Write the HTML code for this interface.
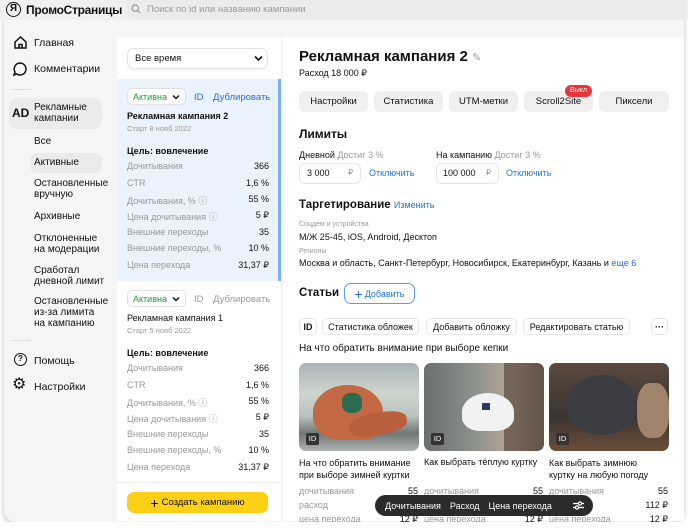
<!DOCTYPE html>
<html><head><meta charset="utf-8"><style>
*{box-sizing:border-box;margin:0;padding:0}
body{width:688px;height:531px;background:#fff;font-family:"Liberation Sans","Noto Sans CJK SC",sans-serif;color:#111;position:relative;overflow:hidden;font-size:10px}
.a{position:absolute;white-space:nowrap}
.frame{position:absolute;left:4px;top:-10px;width:680px;height:532px;border-radius:12px;background:#f5f5f6;box-shadow:0 2px 6px rgba(0,0,0,.25);overflow:hidden}
.hdr{position:absolute;left:0;top:0;width:688px;height:20px;background:#f0f0f0}
.gray{color:#9a9a9a}
.blue{color:#1f74d9}
.row{position:absolute;left:10px;right:12px;display:flex;justify-content:space-between;font-size:9px}
.row span:first-child{color:#999}
.tab{position:absolute;top:91px;height:21px;background:#efefef;border-radius:6px;font-size:9.5px;display:flex;align-items:center;justify-content:center}
.chip{position:absolute;top:318px;height:17px;border:1px solid #e6e6e6;border-radius:5px;font-size:9px;display:flex;align-items:center;justify-content:center;background:#fff}
.img{position:absolute;top:363px;width:120px;height:88px;border-radius:7px;overflow:hidden}
.idb{position:absolute;left:7px;bottom:6px;width:13px;height:12px;background:#333;color:#fff;border-radius:2px;font-size:7.5px;text-align:center;line-height:12px}
.st{position:absolute;font-size:9px;color:#999}
.sv{position:absolute;font-size:9px;text-align:right;width:30px}
</style></head><body>
<div class="frame"></div>
<div class="hdr"></div>
<!-- logo -->
<div class="a" style="left:6px;top:2px;width:15px;height:15px;border:1.5px solid #111;border-radius:50%;font-size:10px;font-weight:bold;text-align:center;line-height:12px">Я</div>
<div class="a" style="left:26px;top:3px;font-size:12px;font-weight:bold;letter-spacing:-0.3px">ПромоСтраницы</div>
<div class="a" style="left:127px;top:0;width:560px;height:19px;background:#ebebeb;border-radius:0 0 0 6px"></div>
<svg class="a" style="left:131px;top:4px" width="10" height="10" viewBox="0 0 10 10"><circle cx="4.2" cy="4.2" r="3.2" fill="none" stroke="#999" stroke-width="1.2"/><path d="M6.6 6.6 L9 9" stroke="#999" stroke-width="1.2"/></svg>
<div class="a gray" style="left:147px;top:4px;font-size:9.5px">Поиск по id или названию кампании</div>
<!-- sidebar -->
<svg class="a" style="left:13px;top:35px" width="15" height="15" viewBox="0 0 15 15"><path d="M2 7 L7.5 2 L13 7 V13 H2 Z M6 13 V9.5 H9 V13" fill="none" stroke="#111" stroke-width="1.5"/></svg>
<div class="a" style="left:34px;top:37px;font-size:10.5px">Главная</div>
<svg class="a" style="left:12px;top:61px" width="16" height="16" viewBox="0 0 16 16"><path d="M8 2a6 6 0 1 1-3.5 10.9L2 14l1-3A6 6 0 0 1 8 2z" fill="none" stroke="#111" stroke-width="1.5"/></svg>
<div class="a" style="left:34px;top:63px;font-size:10.5px">Комментарии</div>
<div class="a" style="left:11px;top:89px;width:20px;height:1px;background:#ddd"></div>
<div class="a" style="left:9px;top:98px;width:93px;height:31px;background:#ebebeb;border-radius:8px"></div>
<div class="a" style="left:12px;top:106px;font-size:12px;font-weight:bold">AD</div>
<div class="a" style="left:34px;top:102px;font-size:10px;line-height:11px">Рекламные<br>кампании</div>
<div class="a" style="left:34px;top:136px;font-size:10px">Все</div>
<div class="a" style="left:30px;top:153px;width:72px;height:20px;background:#ebebeb;border-radius:7px"></div>
<div class="a" style="left:34px;top:157px;font-size:10px">Активные</div>
<div class="a" style="left:34px;top:178px;font-size:10px;line-height:11px">Остановленные<br>вручную</div>
<div class="a" style="left:34px;top:211px;font-size:10px">Архивные</div>
<div class="a" style="left:34px;top:233px;font-size:10px;line-height:11px">Отклоненные<br>на модерации</div>
<div class="a" style="left:34px;top:265px;font-size:10px;line-height:11px">Сработал<br>дневной лимит</div>
<div class="a" style="left:34px;top:296px;font-size:10px;line-height:11px">Остановленные<br>из-за лимита<br>на кампанию</div>
<div class="a" style="left:11px;top:340px;width:20px;height:1px;background:#ddd"></div>
<div class="a" style="left:14px;top:353px;width:13px;height:13px;border:1.5px solid #111;border-radius:50%;font-size:8px;text-align:center;line-height:10px;font-weight:bold">?</div>
<div class="a" style="left:34px;top:355px;font-size:10.5px">Помощь</div>
<div class="a" style="left:12px;top:377px;font-size:16px;line-height:16px">&#9881;</div>
<div class="a" style="left:34px;top:381px;font-size:10.5px">Настройки</div>
<!-- campaigns column -->
<div class="a" style="left:117px;top:37px;width:164px;height:484px;background:#fff"></div>
<div class="a" style="left:127px;top:48px;width:141px;height:21px;border:1px solid #e3e3e3;border-radius:7px;box-shadow:0 1px 2px rgba(0,0,0,.06)"></div>
<div class="a" style="left:135px;top:53px;font-size:9.5px">Все время</div>
<svg class="a" style="left:254px;top:55px" width="9" height="7" viewBox="0 0 9 7"><path d="M1 1.5 L4.5 5 L8 1.5" fill="none" stroke="#111" stroke-width="1.6"/></svg>
<div class="a" style="left:117px;top:79px;width:164px;height:202px;background:#eaf2fc"></div>
<div class="a" style="left:278px;top:79px;width:3px;height:202px;background:#7cb1ef"></div>
<div class="a" style="left:127px;top:88px;width:59px;height:17px;background:#fff;border:1px solid #e0e0e0;border-radius:5px"></div>
<div class="a" style="left:133px;top:92px;font-size:9px;color:#1a9b3a">Активна</div>
<svg class="a" style="left:172px;top:94px" width="8" height="6" viewBox="0 0 8 6"><path d="M1 1.5 L4 4.5 L7 1.5" fill="none" stroke="#111" stroke-width="1.5"/></svg>
<div class="a blue" style="left:194px;top:92px;font-size:9.5px">ID</div>
<div class="a blue" style="left:213px;top:92px;font-size:9.5px">Дублировать</div>
<div class="a" style="left:127px;top:111px;font-size:9px;font-weight:bold">Рекламная кампания 2</div>
<div class="a gray" style="left:127px;top:124px;font-size:7.5px">Старт 8 нояб 2022</div>
<div class="a" style="left:127px;top:146px;font-size:9px;font-weight:bold">Цель: вовлечение</div>
<div class="a" style="left:117px;top:161px;width:164px">
<div class="row" style="top:0">  <span>Дочитывания</span><span>366</span></div>
<div class="row" style="top:17px"><span>CTR</span><span>1,6 %</span></div>
<div class="row" style="top:33px"><span>Дочитывания, % ⓘ</span><span>55 %</span></div>
<div class="row" style="top:49px"><span>Цена дочитывания ⓘ</span><span>5 ₽</span></div>
<div class="row" style="top:66px"><span>Внешние переходы</span><span>35</span></div>
<div class="row" style="top:82px"><span>Внешние переходы, %</span><span>10 %</span></div>
<div class="row" style="top:99px"><span>Цена перехода</span><span>31,37 ₽</span></div>
</div>
<div class="a" style="left:127px;top:290px;width:59px;height:17px;background:#fff;border:1px solid #e0e0e0;border-radius:5px"></div>
<div class="a" style="left:133px;top:294px;font-size:9px;color:#1a9b3a">Активна</div>
<svg class="a" style="left:172px;top:296px" width="8" height="6" viewBox="0 0 8 6"><path d="M1 1.5 L4 4.5 L7 1.5" fill="none" stroke="#111" stroke-width="1.5"/></svg>
<div class="a gray" style="left:194px;top:294px;font-size:9.5px">ID</div>
<div class="a gray" style="left:213px;top:294px;font-size:9.5px">Дублировать</div>
<div class="a" style="left:127px;top:313px;font-size:9px">Рекламная кампания 1</div>
<div class="a gray" style="left:127px;top:326px;font-size:7.5px">Старт 5 нояб 2022</div>
<div class="a" style="left:127px;top:348px;font-size:9px;font-weight:bold">Цель: вовлечение</div>
<div class="a" style="left:117px;top:363px;width:164px">
<div class="row" style="top:0">  <span>Дочитывания</span><span>366</span></div>
<div class="row" style="top:17px"><span>CTR</span><span>1,6 %</span></div>
<div class="row" style="top:33px"><span>Дочитывания, % ⓘ</span><span>55 %</span></div>
<div class="row" style="top:49px"><span>Цена дочитывания ⓘ</span><span>5 ₽</span></div>
<div class="row" style="top:66px"><span>Внешние переходы</span><span>35</span></div>
<div class="row" style="top:82px"><span>Внешние переходы, %</span><span>10 %</span></div>
<div class="row" style="top:99px"><span>Цена перехода</span><span>31,37 ₽</span></div>
</div>
<div class="a" style="left:117px;top:482px;width:164px;height:1px;background:#eee"></div>
<div class="a" style="left:127px;top:492px;width:141px;height:21px;background:#fdd015;border-radius:7px;font-size:9.5px;display:flex;align-items:center;justify-content:center"><span style="font-size:14px;margin-right:3px;line-height:10px">+</span>Создать кампанию</div>
<!-- right panel -->
<div class="a" style="left:283px;top:37px;width:401px;height:484px;background:#fff"></div>
<div class="a" style="left:299px;top:48px;font-size:15px;font-weight:bold">Рекламная кампания 2 <span style="color:#999;font-weight:normal;font-size:11px">✎</span></div>
<div class="a" style="left:299px;top:68px;font-size:9px">Расход 18 000 ₽</div>
<div class="tab" style="left:299px;width:69px">Настройки</div>
<div class="tab" style="left:374px;width:69px">Статистика</div>
<div class="tab" style="left:449px;width:69px">UTM-метки</div>
<div class="tab" style="left:524px;width:69px">Scroll2Site</div>
<div class="tab" style="left:599px;width:70px">Пиксели</div>
<div class="a" style="left:565px;top:85px;width:27px;height:12px;background:#e8363d;color:#fff;border-radius:6px;font-size:7px;text-align:center;line-height:12px">Выкл</div>
<div class="a" style="left:299px;top:127px;font-size:12px;font-weight:bold">Лимиты</div>
<div class="a" style="left:299px;top:150px;font-size:9px">Дневной <span class="gray">Достиг 3 %</span></div>
<div class="a" style="left:436px;top:150px;font-size:9px">На кампанию <span class="gray">Достиг 3 %</span></div>
<div class="a" style="left:299px;top:163px;width:62px;height:21px;border:1px solid #e6e6e6;border-radius:6px"></div>
<div class="a" style="left:307px;top:168px;font-size:9px">3 000</div><div class="a gray" style="left:348px;top:168px;font-size:8px">₽</div>
<div class="a blue" style="left:369px;top:168px;font-size:9px">Отключить</div>
<div class="a" style="left:436px;top:163px;width:63px;height:21px;border:1px solid #e6e6e6;border-radius:6px"></div>
<div class="a" style="left:443px;top:168px;font-size:9px">100 000</div><div class="a gray" style="left:486px;top:168px;font-size:8px">₽</div>
<div class="a blue" style="left:506px;top:168px;font-size:9px">Отключить</div>
<div class="a" style="left:299px;top:199px;font-size:11.5px;font-weight:bold">Таргетирование <span class="blue" style="font-weight:normal;font-size:9px">Изменить</span></div>
<div class="a gray" style="left:299px;top:221px;font-size:7px">Соцдем и устройства</div>
<div class="a" style="left:299px;top:232px;font-size:9px">М/Ж 25-45, iOS, Android, Десктоп</div>
<div class="a gray" style="left:299px;top:248px;font-size:7px">Регионы</div>
<div class="a" style="left:299px;top:258px;font-size:9px">Москва и область, Санкт-Петербург, Новосибирск, Екатеринбург, Казань и <span class="blue">еще 6</span></div>
<div class="a" style="left:299px;top:287px;font-size:11.5px;font-weight:bold">Статьи</div>
<div class="a blue" style="left:344px;top:283px;width:71px;height:21px;border:1px solid #5a9be8;border-radius:7px;font-size:9px;display:flex;align-items:center;justify-content:center"><span style="font-size:14px;margin-right:2px;line-height:10px">+</span>Добавить</div>
<div class="chip" style="left:299px;width:18px;font-weight:bold">ID</div>
<div class="chip" style="left:322px;width:97px">Статистика обложек</div>
<div class="chip" style="left:426px;width:91px">Добавить обложку</div>
<div class="chip" style="left:523px;width:107px">Редактировать статью</div>
<div class="chip" style="left:651px;width:17px;font-weight:bold">···</div>
<div class="a" style="left:299px;top:343px;font-size:10px">На что обратить внимание при выборе кепки</div>
<div class="img" style="left:299px;background:linear-gradient(180deg,#a8b4b8 0%,#cfd6d0 35%,#b9c2bd 60%,#6f7775 80%,#aeb2b0 100%)">
<div class="a" style="left:14px;top:22px;width:70px;height:55px;background:#c36a45;border-radius:50% 50% 30% 40%"></div>
<div class="a" style="left:50px;top:50px;width:58px;height:22px;background:#b85f3d;border-radius:40%;transform:rotate(-10deg)"></div>
<div class="a" style="left:43px;top:30px;width:20px;height:20px;background:#2e6b50;border-radius:40%"></div>
<div class="idb">ID</div></div>
<div class="img" style="left:424px;background:linear-gradient(90deg,#6b6f6e 0%,#8c908b 40%,#b8a798 75%,#7a6a5e 100%)">
<div class="a" style="left:80px;top:0;width:40px;height:88px;background:#5a4a3e;opacity:.7"></div>
<div class="a" style="left:38px;top:30px;width:52px;height:38px;background:#f2f2f2;border-radius:50% 50% 35% 35%"></div>
<div class="a" style="left:58px;top:40px;width:8px;height:7px;background:#2a3a66"></div>
<div class="idb">ID</div></div>
<div class="img" style="left:549px;background:linear-gradient(180deg,#5a4a3f 0%,#3a3430 60%,#6b4e3a 100%)">
<div class="a" style="left:18px;top:12px;width:70px;height:60px;background:#3b3d42;border-radius:50%"></div>
<div class="a" style="left:88px;top:20px;width:32px;height:55px;background:#a0836a;border-radius:40%"></div>
<div class="idb">ID</div></div>
<div class="a" style="left:299px;top:457px;font-size:9px;line-height:12px">На что обратить внимание<br>при выборе зимней куртки</div>
<div class="a" style="left:424px;top:457px;font-size:9px">Как выбрать тёплую куртку</div>
<div class="a" style="left:549px;top:457px;font-size:9px;line-height:12px">Как выбрать зимнюю<br>куртку на любую погоду</div>
<div class="st" style="left:299px;top:486px">дочитывания</div><div class="sv" style="left:388px;top:486px">55</div>
<div class="st" style="left:299px;top:500px">расход</div>
<div class="st" style="left:299px;top:514px">цена перехода</div><div class="sv" style="left:388px;top:514px">12 ₽</div>
<div class="st" style="left:424px;top:486px">дочитывания</div><div class="sv" style="left:513px;top:486px">55</div>
<div class="st" style="left:424px;top:514px">цена перехода</div><div class="sv" style="left:513px;top:514px">12 ₽</div>
<div class="st" style="left:549px;top:486px">дочитывания</div><div class="sv" style="left:638px;top:486px">55</div>
<div class="sv" style="left:638px;top:500px">112 ₽</div>
<div class="st" style="left:549px;top:514px">цена перехода</div><div class="sv" style="left:638px;top:514px">12 ₽</div>
<div class="a" style="left:0;top:522px;width:688px;height:9px;background:#fff"></div>
<div class="a" style="left:375px;top:495px;width:218px;height:21px;background:#2b2b2e;border-radius:11px;color:#fff;font-size:9px;display:flex;align-items:center;padding-left:10px;gap:9px;white-space:nowrap"><span>Дочитывания</span><span>Расход</span><span>Цена перехода</span>
<svg style="margin-left:12px" width="11" height="9" viewBox="0 0 11 9"><path d="M0 2.5H11M0 6.5H11" stroke="#fff" stroke-width="1.2"/><circle cx="7" cy="2.5" r="1.6" fill="#2b2b2e" stroke="#fff" stroke-width="1.2"/><circle cx="4" cy="6.5" r="1.6" fill="#2b2b2e" stroke="#fff" stroke-width="1.2"/></svg></div>
</body></html>
